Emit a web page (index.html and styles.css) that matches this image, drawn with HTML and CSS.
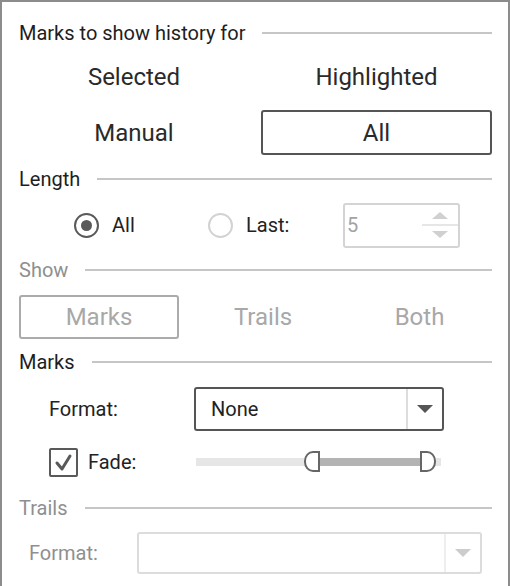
FILE: index.html
```html
<!DOCTYPE html>
<html>
<head>
<meta charset="utf-8">
<link rel="stylesheet" href="styles.css">
</head>
<body>
<div class="panel">
  <div class="hdr hdr-first"><span class="hdr-text">Marks to show history for</span><span class="hdr-line"></span></div>

  <div class="opts opts-a">
    <div class="opt">Selected</div>
    <div class="opt">Highlighted</div>
  </div>
  <div class="opts opts-b">
    <div class="opt">Manual</div>
    <div class="opt opt-on">All</div>
  </div>

  <div class="hdr hdr-length"><span class="hdr-text">Length</span><span class="hdr-line"></span></div>

  <div class="len-row">
    <div class="radio-item radio-item-1"><span class="radio radio-on"></span><span class="lbl">All</span></div>
    <div class="radio-item radio-item-2"><span class="radio radio-off"></span><span class="lbl">Last:</span></div>
    <div class="spin">
      <span class="spin-val">5</span>
      <div class="spin-arrows">
        <div class="spin-half"><span class="tri-up"></span></div>
        <div class="spin-half spin-half-b"><span class="tri-down"></span></div>
      </div>
    </div>
  </div>

  <div class="hdr hdr-show dis"><span class="hdr-text">Show</span><span class="hdr-line"></span></div>

  <div class="seg">
    <div class="seg-item seg-on">Marks</div>
    <div class="seg-item">Trails</div>
    <div class="seg-item">Both</div>
  </div>

  <div class="hdr hdr-marks"><span class="hdr-text">Marks</span><span class="hdr-line"></span></div>

  <div class="fmt-row">
    <span class="fmt-lbl">Format:</span>
    <div class="dd">
      <span class="dd-val">None</span>
      <span class="dd-btn"><span class="tri-dd"></span></span>
    </div>
  </div>

  <div class="fade-row">
    <span class="cb"><svg width="24" height="25" viewBox="0 0 24 25"><polyline points="5,13 10,19 18,6" fill="none" stroke="#595959" stroke-width="3" stroke-linecap="round" stroke-linejoin="round"/></svg></span>
    <span class="fade-lbl">Fade:</span>
    <div class="slider">
      <div class="track">
        <div class="track-fill"></div>
      </div>
      <span class="handle handle-l"></span>
      <span class="handle handle-r"></span>
    </div>
  </div>

  <div class="hdr hdr-trails dis"><span class="hdr-text">Trails</span><span class="hdr-line"></span></div>

  <div class="fmt-row2">
    <span class="fmt-lbl2">Format:</span>
    <div class="dd2">
      <span class="dd2-val"></span>
      <span class="dd2-btn"><span class="tri-dd2"></span></span>
    </div>
  </div>
</div>
</body>
</html>
```

FILE: styles.css
```css
* { box-sizing: border-box; }
html, body { margin: 0; padding: 0; background: #ffffff; }
body {
  font-family: Roboto, "Liberation Sans", sans-serif;
  color: #222222;
}
.panel {
  width: 510px;
  height: 586px;
  border: 2px solid #8c8c8c;
  border-bottom: none;
  padding: 0 16px 0 17px;
  display: flex;
  flex-direction: column;
  overflow: hidden;
}

/* section headers */
.hdr {
  height: 24px;
  display: flex;
  align-items: center;
  gap: 17px;
  font-size: 20px;
  color: #1e1e1e;
  flex: none;
}
.hdr-text { white-space: nowrap; line-height: 24px; }
.hdr-line { flex: 1; height: 2px; background: #c6c6c6; }
.hdr.dis { color: #8f8f8f; }
.hdr-first { margin-top: 19px; }
.hdr-length { margin-top: 11px; }
.hdr-show { margin-top: 11px; }
.hdr-marks { margin-top: 11px; }
.hdr-trails { margin-top: 19px; }

/* Selected / Highlighted / Manual / All */
.opts {
  display: grid;
  grid-template-columns: 230px 231px;
  column-gap: 12px;
  flex: none;
}
.opts-a { height: 44px; margin-top: 10px; }
.opts-b { height: 46px; margin-top: 11px; }
.opt {
  display: flex;
  align-items: center;
  justify-content: center;
  font-size: 24px;
  color: #2a2a2a;
}
.opt-on {
  border: 2px solid #555555;
  border-radius: 3px;
  height: 45px;
}

/* Length row */
.len-row {
  height: 44px;
  margin-top: 12px;
  padding-left: 55px;
  display: flex;
  align-items: center;
  flex: none;
}
.radio-item { display: flex; align-items: center; gap: 13px; font-size: 20px; }
.radio-item-1 { width: 134px; }
.radio-item-2 { width: 135px; }
.radio {
  width: 25px;
  height: 25px;
  border-radius: 50%;
  display: flex;
  align-items: center;
  justify-content: center;
  flex: none;
}
.radio-on { border: 2px solid #595959; }
.radio-on::after {
  content: "";
  width: 11px;
  height: 11px;
  border-radius: 50%;
  background: #595959;
}
.radio-off { border: 2px solid #d2d2d2; }
.lbl { color: #222222; }
.spin {
  width: 117px;
  height: 45px;
  border: 2px solid #d4d4d4;
  border-radius: 3px;
  display: flex;
  align-items: center;
}
.spin-val {
  flex: 1;
  padding-left: 2px;
  font-size: 20px;
  color: #a3a3a3;
}
.spin-arrows {
  width: 36px;
  height: 100%;
  display: flex;
  flex-direction: column;
}
.spin-half {
  flex: 1;
  display: flex;
  align-items: center;
  justify-content: center;
  padding-left: 0;
}
.spin-half-b { border-top: 2px solid #e6e6e6; }
.tri-up {
  width: 0; height: 0;
  border-left: 8px solid transparent;
  border-right: 8px solid transparent;
  border-bottom: 7px solid #d0d0d0;
  margin-top: 3px;
}
.tri-down {
  width: 0; height: 0;
  border-left: 8px solid transparent;
  border-right: 8px solid transparent;
  border-top: 7px solid #d0d0d0;
  margin-bottom: 3px;
}

/* Show segmented */
.seg {
  height: 44px;
  margin-top: 13px;
  display: grid;
  grid-template-columns: 160px 168px 1fr;
  flex: none;
}
.seg-item {
  display: flex;
  align-items: center;
  justify-content: center;
  font-size: 24px;
  color: #a8a8a8;
}
.seg-on {
  border: 2px solid #ababab;
  border-radius: 3px;
}

/* Marks format */
.fmt-row {
  height: 44px;
  margin-top: 13px;
  padding-left: 30px;
  display: flex;
  align-items: center;
  flex: none;
}
.fmt-lbl { width: 145px; font-size: 20px; color: #222222; }
.dd {
  width: 250px;
  height: 44px;
  border: 2px solid #555555;
  border-radius: 3px;
  display: flex;
  align-items: center;
}
.dd-val { flex: 1; padding-left: 15px; font-size: 20px; color: #222222; }
.dd-btn {
  width: 36px;
  height: 100%;
  border-left: 2px solid #dddddd;
  display: flex;
  align-items: center;
  justify-content: center;
}
.tri-dd {
  width: 0; height: 0;
  border-left: 8px solid transparent;
  border-right: 8px solid transparent;
  border-top: 8px solid #555555;
}

/* Fade row */
.fade-row {
  height: 30px;
  margin-top: 16px;
  padding-left: 30px;
  display: flex;
  align-items: center;
  flex: none;
}
.cb {
  width: 29px;
  height: 29px;
  border: 2px solid #595959;
  border-radius: 2px;
  display: flex;
  align-items: center;
  justify-content: center;
  flex: none;
}
.fade-lbl { margin-left: 10px; width: 108px; font-size: 20px; color: #222222; }
.slider {
  position: relative;
  width: 245px;
  height: 22px;
  display: flex;
  align-items: center;
}
.track {
  width: 100%;
  height: 8px;
  background: #e6e6e6;
  display: flex;
}
.track-fill {
  margin-left: 115px;
  width: 117px;
  height: 100%;
  background: #b3b3b3;
}
.handle {
  position: absolute;
  top: 0;
  width: 16px;
  height: 21px;
  background: #ffffff;
  border: 2px solid #666666;
}
.handle-l { left: 108px; border-radius: 9px 0 0 9px / 10px 0 0 10px; }
.handle-r { left: 224px; border-radius: 0 9px 9px 0 / 0 10px 10px 0; }

/* Trails format */
.fmt-row2 {
  height: 42px;
  margin-top: 12px;
  padding-left: 10px;
  display: flex;
  align-items: center;
  flex: none;
}
.fmt-lbl2 { width: 108px; font-size: 20px; color: #8f8f8f; }
.dd2 {
  width: 345px;
  height: 42px;
  border: 2px solid #dcdcdc;
  border-radius: 3px;
  display: flex;
  align-items: center;
}
.dd2-val { flex: 1; }
.dd2-btn {
  width: 36px;
  height: 100%;
  border-left: 2px solid #eeeeee;
  display: flex;
  align-items: center;
  justify-content: center;
}
.tri-dd2 {
  width: 0; height: 0;
  border-left: 8px solid transparent;
  border-right: 8px solid transparent;
  border-top: 8px solid #cccccc;
}
```
